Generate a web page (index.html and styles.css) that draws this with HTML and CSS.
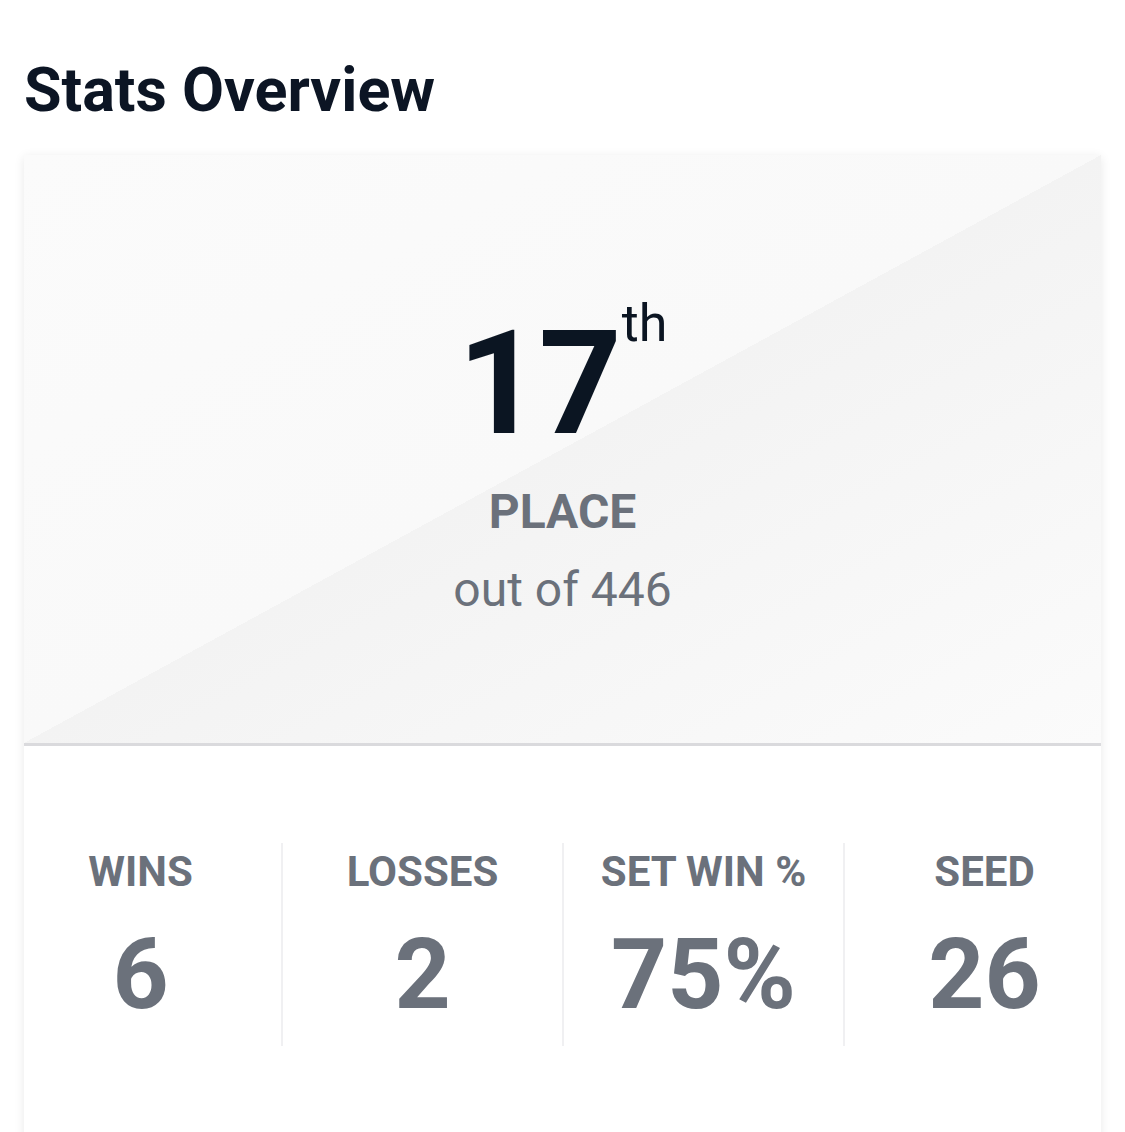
FILE: index.html
```html
<!doctype html>
<html lang="en">
<head>
	<meta charset="UTF-8">
	<title>Stats Overview</title>
	<link rel="stylesheet" href="styles.css">
</head>
<body>
	<div class="page">
		<h2 class="title">Stats Overview</h2>
		<div class="card">
			<div class="rankbox">
				<div class="rank">
					<span class="rank-num">17</span>
					<span class="rank-suffix">th</span>
				</div>
				<div class="rank-label">PLACE</div>
				<div class="rank-total">out of 446</div>
			</div>
			<div class="statbox">
				<div class="stats">
					<div class="stat">
						<div class="stat-label">WINS</div>
						<div class="stat-value">6</div>
					</div>
					<div class="stat">
						<div class="stat-label">LOSSES</div>
						<div class="stat-value">2</div>
					</div>
					<div class="stat">
						<div class="stat-label">SET WIN %</div>
						<div class="stat-value">75%</div>
					</div>
					<div class="stat">
						<div class="stat-label">SEED</div>
						<div class="stat-value">26</div>
					</div>
				</div>
			</div>
		</div>
	</div>
</body>
</html>
```
FILE: styles.css
```css
html,body{
	margin: 0;
	padding: 0;
	background: #fff;
	font-family: Roboto, "Liberation Sans", sans-serif;
}
.page{
	padding: 0 24px;
}
.title{
	margin: 0;
	padding-top: 60px;
	font-size: 61px;
	line-height: 1;
	font-weight: 700;
	color: #0c1524;
}
.card{
	margin-top: 34px;
	background: #fff;
	box-shadow: 0 2px 10px rgba(0,0,0,0.09);
	height: 1000px;
}
.rankbox{
	height: 591px;
	box-sizing: border-box;
	padding-top: 156px;
	display: flex;
	flex-direction: column;
	align-items: center;
	background: linear-gradient(to bottom right, #fbfbfb 0%, #f9f9f9 50%, #f3f3f3 50%, #f7f7f7 75%, #fbfbfb 100%);
	border-bottom: 3px solid #dadadd;
}
.rank{
	display: flex;
	align-items: flex-start;
	margin-left: 0;
}
.rank-num{
	font-size: 145px;
	line-height: 1;
	font-weight: 700;
	color: #0b1522;
	letter-spacing: -2px;
}
.rank-suffix{
	font-size: 52px;
	line-height: 1;
	margin-top: -13px;
	margin-left: 2px;
	color: #0b1522;
}
.rank-label{
	margin-top: 32px;
	font-size: 48px;
	line-height: 1;
	font-weight: 700;
	color: #6b717b;
}
.rank-total{
	margin-top: 30px;
	font-size: 48px;
	line-height: 1;
	color: #6b717b;
}
.statbox{
	padding-top: 97px;
}
.stats{
	display: grid;
	grid-template-columns: repeat(4, 1fr);
	margin: 0 -23px 0 -24px;
}
.stat{
	display: flex;
	flex-direction: column;
	align-items: center;
	height: 203px;
	box-sizing: border-box;
	padding-top: 8px;
	border-left: 2px solid #f0f0f2;
}
.stat:first-child{
	border-left: none;
}
.stat-label{
	font-size: 42px;
	line-height: 1;
	font-weight: 700;
	color: #6b717b;
}
.stat-value{
	margin-top: 33px;
	font-size: 98px;
	line-height: 1;
	font-weight: 700;
	color: #6b717b;
}
```
